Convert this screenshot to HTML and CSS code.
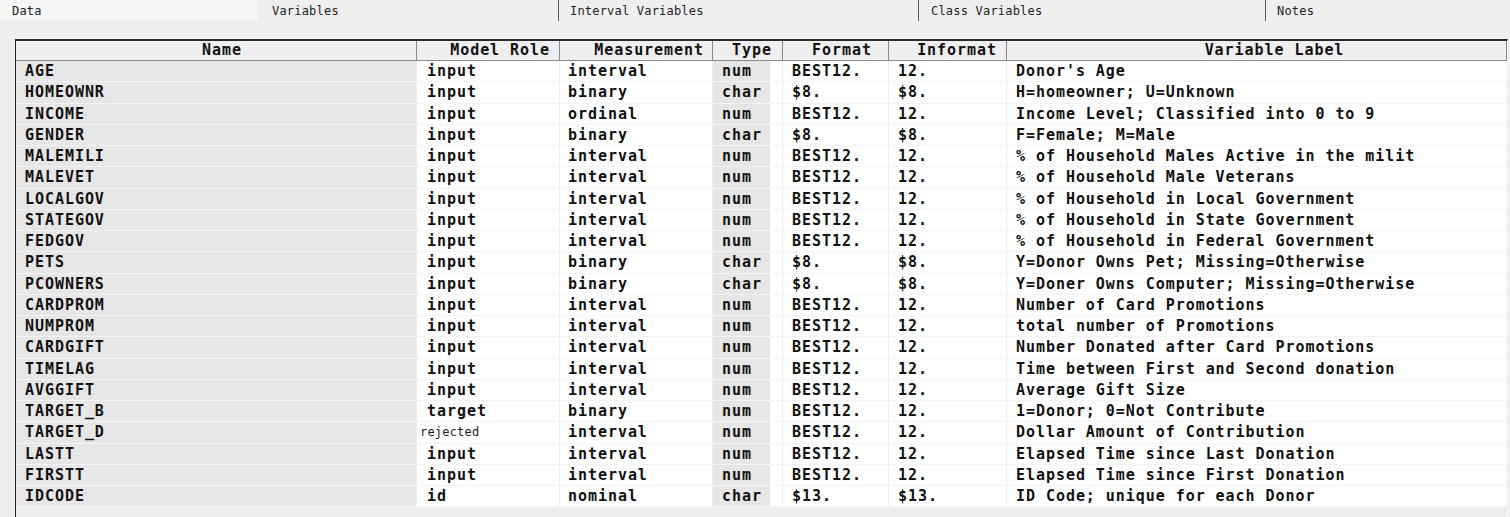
FILE: index.html
```html
<!DOCTYPE html>
<html>
<head>
<meta charset="utf-8">
<link rel="stylesheet" href="styles.css">
</head>
<body>
<div class="tabs">
  <div class="tab tab-data">Data</div>
  <div class="tab tab-vars">Variables</div>
  <div class="tab tab-int">Interval Variables</div>
  <div class="tab tab-class">Class Variables</div>
  <div class="tab tab-notes">Notes</div>
</div>
<div class="panel">
  <div class="grid">
    <div class="hd hd-name">Name</div>
    <div class="hd hd-role">Model Role</div>
    <div class="hd hd-meas">Measurement</div>
    <div class="hd hd-type">Type</div>
    <div class="hd hd-fmt">Format</div>
    <div class="hd hd-inf">Informat</div>
    <div class="hd hd-lbl">Variable Label</div>

    <div class="c name">AGE</div><div class="c role">input</div><div class="c meas">interval</div><div class="c type">num</div><div class="c fmt">BEST12.</div><div class="c inf">12.</div><div class="c lbl">Donor's Age</div>
    <div class="c name">HOMEOWNR</div><div class="c role">input</div><div class="c meas">binary</div><div class="c type">char</div><div class="c fmt">$8.</div><div class="c inf">$8.</div><div class="c lbl">H=homeowner; U=Unknown</div>
    <div class="c name">INCOME</div><div class="c role">input</div><div class="c meas">ordinal</div><div class="c type">num</div><div class="c fmt">BEST12.</div><div class="c inf">12.</div><div class="c lbl">Income Level; Classified into 0 to 9</div>
    <div class="c name">GENDER</div><div class="c role">input</div><div class="c meas">binary</div><div class="c type">char</div><div class="c fmt">$8.</div><div class="c inf">$8.</div><div class="c lbl">F=Female; M=Male</div>
    <div class="c name">MALEMILI</div><div class="c role">input</div><div class="c meas">interval</div><div class="c type">num</div><div class="c fmt">BEST12.</div><div class="c inf">12.</div><div class="c lbl">% of Household Males Active in the milit</div>
    <div class="c name">MALEVET</div><div class="c role">input</div><div class="c meas">interval</div><div class="c type">num</div><div class="c fmt">BEST12.</div><div class="c inf">12.</div><div class="c lbl">% of Household Male Veterans</div>
    <div class="c name">LOCALGOV</div><div class="c role">input</div><div class="c meas">interval</div><div class="c type">num</div><div class="c fmt">BEST12.</div><div class="c inf">12.</div><div class="c lbl">% of Household in Local Government</div>
    <div class="c name">STATEGOV</div><div class="c role">input</div><div class="c meas">interval</div><div class="c type">num</div><div class="c fmt">BEST12.</div><div class="c inf">12.</div><div class="c lbl">% of Household in State Government</div>
    <div class="c name">FEDGOV</div><div class="c role">input</div><div class="c meas">interval</div><div class="c type">num</div><div class="c fmt">BEST12.</div><div class="c inf">12.</div><div class="c lbl">% of Household in Federal Government</div>
    <div class="c name">PETS</div><div class="c role">input</div><div class="c meas">binary</div><div class="c type">char</div><div class="c fmt">$8.</div><div class="c inf">$8.</div><div class="c lbl">Y=Donor Owns Pet; Missing=Otherwise</div>
    <div class="c name">PCOWNERS</div><div class="c role">input</div><div class="c meas">binary</div><div class="c type">char</div><div class="c fmt">$8.</div><div class="c inf">$8.</div><div class="c lbl">Y=Doner Owns Computer; Missing=Otherwise</div>
    <div class="c name">CARDPROM</div><div class="c role">input</div><div class="c meas">interval</div><div class="c type">num</div><div class="c fmt">BEST12.</div><div class="c inf">12.</div><div class="c lbl">Number of Card Promotions</div>
    <div class="c name">NUMPROM</div><div class="c role">input</div><div class="c meas">interval</div><div class="c type">num</div><div class="c fmt">BEST12.</div><div class="c inf">12.</div><div class="c lbl">total number of Promotions</div>
    <div class="c name">CARDGIFT</div><div class="c role">input</div><div class="c meas">interval</div><div class="c type">num</div><div class="c fmt">BEST12.</div><div class="c inf">12.</div><div class="c lbl">Number Donated after Card Promotions</div>
    <div class="c name">TIMELAG</div><div class="c role">input</div><div class="c meas">interval</div><div class="c type">num</div><div class="c fmt">BEST12.</div><div class="c inf">12.</div><div class="c lbl">Time between First and Second donation</div>
    <div class="c name">AVGGIFT</div><div class="c role">input</div><div class="c meas">interval</div><div class="c type">num</div><div class="c fmt">BEST12.</div><div class="c inf">12.</div><div class="c lbl">Average Gift Size</div>
    <div class="c name">TARGET_B</div><div class="c role">target</div><div class="c meas">binary</div><div class="c type">num</div><div class="c fmt">BEST12.</div><div class="c inf">12.</div><div class="c lbl">1=Donor; 0=Not Contribute</div>
    <div class="c name">TARGET_D</div><div class="c role role-small">rejected</div><div class="c meas">interval</div><div class="c type">num</div><div class="c fmt">BEST12.</div><div class="c inf">12.</div><div class="c lbl">Dollar Amount of Contribution</div>
    <div class="c name">LASTT</div><div class="c role">input</div><div class="c meas">interval</div><div class="c type">num</div><div class="c fmt">BEST12.</div><div class="c inf">12.</div><div class="c lbl">Elapsed Time since Last Donation</div>
    <div class="c name">FIRSTT</div><div class="c role">input</div><div class="c meas">interval</div><div class="c type">num</div><div class="c fmt">BEST12.</div><div class="c inf">12.</div><div class="c lbl">Elapsed Time since First Donation</div>
    <div class="c name">IDCODE</div><div class="c role">id</div><div class="c meas">nominal</div><div class="c type">char</div><div class="c fmt">$13.</div><div class="c inf">$13.</div><div class="c lbl">ID Code; unique for each Donor</div>
  </div>
</div>
</body>
</html>
```
FILE: styles.css
```css
html, body {
  margin: 0;
  padding: 0;
  background: #efefef;
  width: 1510px;
  height: 517px;
  overflow: hidden;
}

.tabs {
  display: flex;
  height: 21px;
  font-family: "DejaVu Sans Mono", monospace;
  font-size: 12px;
  letter-spacing: 0.2px;
  color: #222;
}

.tab {
  box-sizing: border-box;
  height: 21px;
  line-height: 22px;
  white-space: nowrap;
}

.tab-data {
  width: 258px;
  padding-left: 12px;
  background: #f6f6f6;
}

.tab-vars {
  width: 301px;
  padding-left: 14px;
  border-right: 1px solid #555;
}

.tab-int {
  width: 360px;
  padding-left: 11px;
  border-right: 1px solid #555;
}

.tab-class {
  width: 347px;
  padding-left: 12px;
  border-right: 1px solid #555;
}

.tab-notes {
  flex: 1;
  padding-left: 11px;
}

.panel {
  margin-top: 18px;
  margin-left: 15px;
  width: 1493px;
  height: 478px;
  box-sizing: border-box;
  border-left: 1px solid #222;
  border-top: 2px solid #2a2a2a;
  border-right: 1px solid #fafafa;
}

.grid {
  display: grid;
  grid-template-columns: 401px 143px 153px 70px 106px 118px 500px;
  grid-template-rows: 20px;
  grid-auto-rows: 21.25px;
  font-family: "DejaVu Sans Mono", monospace;
  font-weight: bold;
  font-size: 15px;
  letter-spacing: 0.95px;
  color: #111;
}

.hd {
  box-sizing: border-box;
  background: #efefef;
  border-bottom: 1px solid #8a8a8a;
  border-right: 1px solid #8a8a8a;
  line-height: 19px;
  white-space: nowrap;
}

.hd-name { text-align: center; padding-left: 12px; }
.hd-role { text-align: right; padding-right: 9px; }
.hd-meas { text-align: right; padding-right: 8px; }
.hd-type { text-align: right; padding-right: 10px; }
.hd-fmt { text-align: right; padding-right: 16px; }
.hd-inf { text-align: right; padding-right: 9px; }
.hd-lbl { text-align: center; padding-left: 36px; }

.c {
  box-sizing: border-box;
  background: #fff;
  border-bottom: 1px solid #f4f4f4;
  border-right: 1px solid #ededed;
  line-height: 20px;
  padding-left: 9px;
  white-space: nowrap;
  overflow: hidden;
}

.name {
  background: #e6e6e6;
  border-bottom-color: #f3f3f3;
}

.role { padding-left: 10px; }

.role-small {
  padding-left: 3px;
  font-weight: normal;
  font-size: 12px;
  letter-spacing: 0.2px;
  color: #222;
}

.meas { padding-left: 8px; }

.type {
  background: linear-gradient(to right, #e6e6e6 57px, #fff 57px);
}
```
